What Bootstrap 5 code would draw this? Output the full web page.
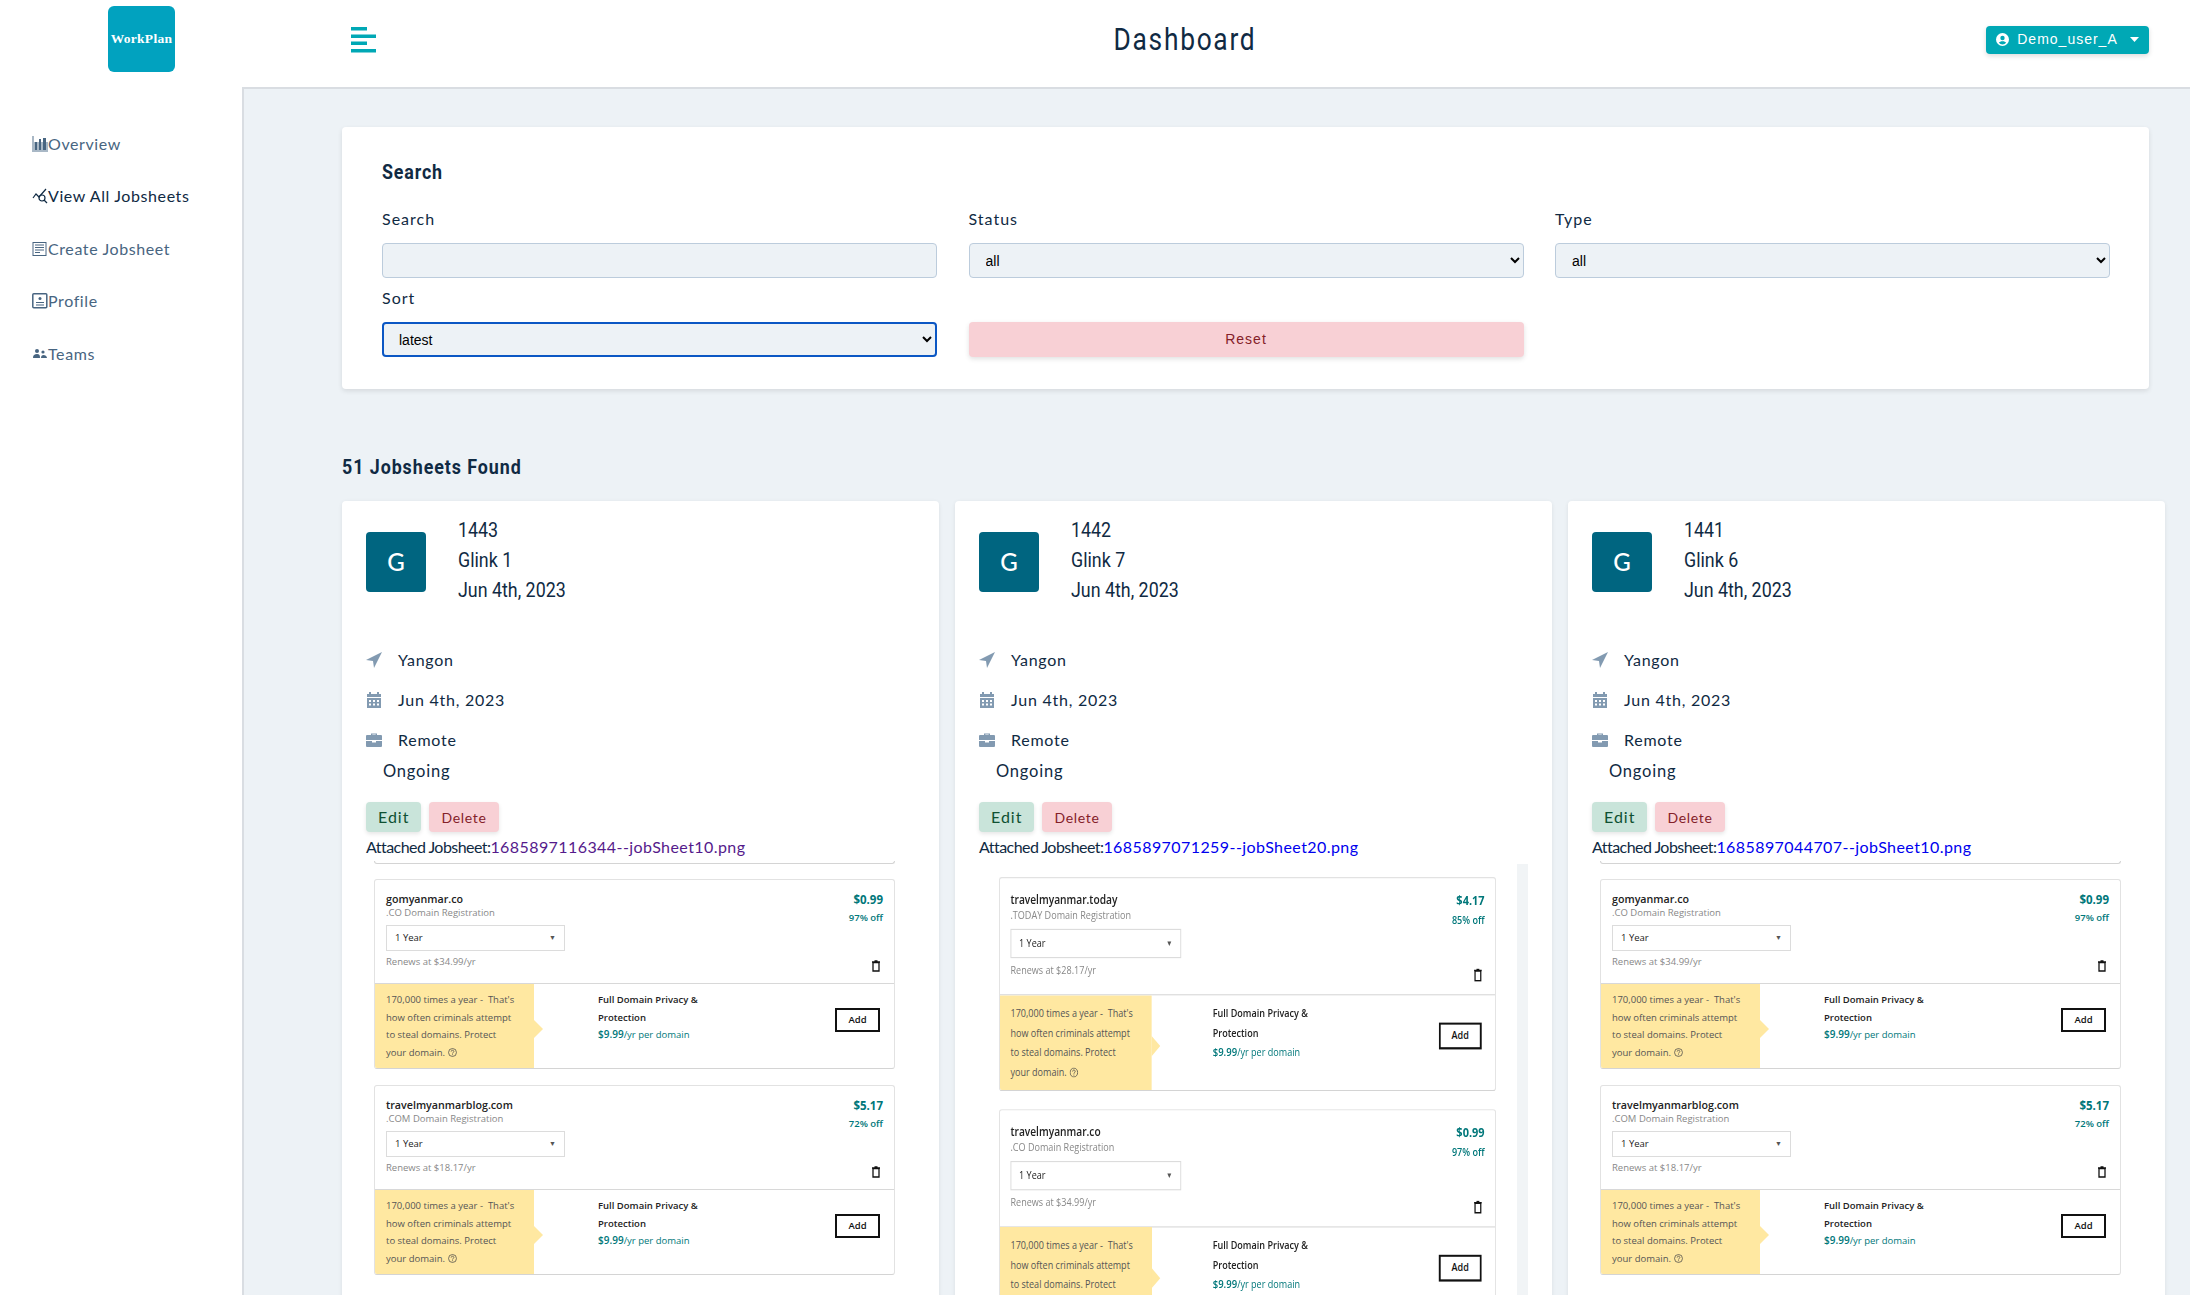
<!DOCTYPE html>
<html lang="en">
<head>
<meta charset="UTF-8">
<title>Dashboard</title>
<link href="https://cdn.jsdelivr.net/npm/bootstrap@5.3.0/dist/css/bootstrap.min.css" rel="stylesheet">
<style>
    html, body { height: 100%; overflow: hidden; }
    body { font-family: "Lato", "Open Sans", sans-serif; color: #102a43; background: #fff; }
    .cond { font-family: "Roboto", sans-serif; display: inline-block; transform: scaleX(.85); transform-origin: left center; white-space: nowrap; }
    .side-col { width: 242px; flex: none; }
    .logo-box { width: 67px; height: 66px; margin: 6px 0 0 108px; background: #01a2bf; border-radius: 6px; color: #fff; font-family: "Liberation Serif", serif; font-weight: 700; font-size: 13.5px; letter-spacing: .3px; }
    .side-nav { margin-top: 45.5px; padding-left: 32px; }
    .side-link { height: 52.5px; color: #486581; font-size: 16px; letter-spacing: .6px; text-decoration: none; }
    .side-link.is-active { color: #102a43; }
    .side-link svg { width: 16px; height: 16px; flex: none; }
    .top-bar { height: 89px; border-bottom: 2px solid #d9dde2; padding: 0 41px 8px 109px; }
    .burger-icon { flex: none; }
    .page-title { font-size: 31px; letter-spacing: 2px; font-weight: 400; margin: 0; color: #102a43; transform-origin: center; }
    .title-slot { flex-grow: 1; text-align: center; padding-left: 8px; }
    .user-btn { background: #00a8b5; color: #fff; border: 0; border-radius: 4px; height: 28px; width: 163px; flex: none; font-size: 14px; letter-spacing: 1px; font-family: "Liberation Sans", sans-serif; box-shadow: 0 2px 5px rgba(0,0,0,.14); }
    .main-area { background: #edf2f6; border-left: 2px solid #d9dde2; height: 1206px; padding: 38px 0 0 98px; }
    .search-panel { width: 1807px; height: 262px; background: #fff; border-radius: 4px; box-shadow: 0 2px 5px rgba(0,0,0,.1); padding: 31px 40px 0; }
    .panel-title { font-size: 21px; font-weight: 700; letter-spacing: 1px; line-height: 28px; margin-bottom: 21px; display: block; }
    .form-rows { display: grid; grid-template-columns: 555px 555px 555px; column-gap: 31.5px; }
    .field-label { font-size: 16px; letter-spacing: 1px; margin-bottom: 12px; line-height: 24px; display: block; }
    .search-input { height: 35px; background-color: #edf2f6; border: 1px solid #bcccdc; border-radius: 4px; font-family: "Liberation Sans", sans-serif; font-size: 14px; color: #000; padding: 0 12px; width: 100%; }
    .search-input.is-focus { border: 2px solid #0b57c4; padding: 0 11px; }
    .field-cell { margin-bottom: 8px; }
    .reset-btn { height: 35px; background: #f8d0d5; color: #842029; border: 0; border-radius: 4px; width: 100%; font-size: 14px; letter-spacing: 1px; box-shadow: 0 2px 5px rgba(0,0,0,.12); margin-top: 36px; font-family: "Liberation Sans", sans-serif; }
    .found-title { font-size: 21px; font-weight: 700; letter-spacing: 1.1px; margin: 64px 0 20px; line-height: 28px; display: block; }
    .job-grid { display: flex; gap: 16px; }
    .job-card { width: 597px; height: 800px; flex: none; background: #fff; border-radius: 4px; box-shadow: 0 1px 4px rgba(0,0,0,.08); padding: 14px 24px 0; overflow: hidden; position: relative; }
    .avatar-box { width: 60px; height: 60px; background: #006580; color: #fff; border-radius: 4px; font-size: 24px; font-weight: 500; margin-top: 17px; margin-right: 32px; }
    .head-lines { font-size: 21px; line-height: 30px; color: #102a43; display: block; }
    .fact-list { margin-top: 35px; font-size: 16px; letter-spacing: .75px; }
    .fact-row { height: 40px; gap: 16px; }
    .fact-row svg { width: 16px; height: 16px; flex: none; color: #829ab1; }
    .status-line { margin: -5px 0 0 17px; height: 32px; line-height: 32px; font-size: 16.5px; letter-spacing: .8px; }
    .act-row { margin-top: 15px; }
    .act-btn { height: 30px; border: 0; border-radius: 4px; padding: 0 12px; font-size: 16px; letter-spacing: 1px; box-shadow: 0 2px 4px rgba(0,0,0,.1); }
    .act-edit { background: #c9e4da; color: #0f5132; }
    .act-del { background: #f8d0d5; color: #842029; font-size: 14px; letter-spacing: .7px; }
    .attach-line { font-size: 16px; line-height: 24px; margin-top: 3px; white-space: nowrap; letter-spacing: -.55px; }
    .attach-line a { letter-spacing: .42px; text-decoration: none; }
    .visited { color: #551a8b; }
    .unvisited { color: #0000ee; }
    .clip-edge { position: absolute; left: 32px; top: 360px; width: 521px; height: 3px; border: 1px solid #d4d4d4; border-top: 0; border-radius: 0 0 4px 4px; }
    .stack-abs { position: absolute; left: 32px; top: 378px; width: 521px; }
    .stack-b { left: 44px; top: 376px; transform: scale(.954, 1.127); transform-origin: top left; }
    .scroll-strip { position: absolute; left: 562px; top: 363px; bottom: 0; width: 11px; background: #f1f4f6; }
    .domain-box { height: 190px; border: 1px solid #e2e2e2; border-bottom-color: #d4d4d4; border-radius: 3px; margin-bottom: 16px; font-family: "Open Sans", sans-serif; background: #fff; overflow: hidden; }
    .domain-top { height: 104px; padding: 12px 10px 0 11px; border-bottom: 1px solid #d8d8d8; position: relative; }
    .domain-name { font-size: 10.7px; font-weight: 600; color: #222; line-height: 14px; }
    .domain-sub { font-size: 9.5px; color: #888; line-height: 14px; }
    .year-box { width: 179px; height: 26px; margin-top: 5px; border: 1px solid #dcdcdc; font-size: 9.5px; color: #222; padding: 0 8px; }
    .year-caret { font-size: 7px; color: #555; }
    .renew-line { font-size: 9.5px; color: #888; margin-top: 4px; line-height: 14px; }
    .price-main { position: absolute; right: 11px; top: 12px; font-size: 11.5px; font-weight: 700; color: #00777a; line-height: 16px; text-align: right; }
    .price-off { font-size: 9.5px; line-height: 20px; font-weight: 600; }
    .trash-icon { position: absolute; right: 13px; top: 80px; width: 10px; height: 12px; }
    .domain-low { height: 85px; position: relative; }
    .warn-flag { width: 159px; background: #ffe8a1; padding: 7px 4px 0 11px; font-size: 9.5px; line-height: 17.7px; color: #555; position: relative; flex: none; white-space: nowrap; }
    .warn-flag::after { content: ""; position: absolute; right: -9px; top: 36px; border-left: 9px solid #ffe8a1; border-top: 9px solid transparent; border-bottom: 9px solid transparent; }
    .warn-flag svg { width: 9px; height: 9px; margin-left: 3px; vertical-align: -1px; }
    .privacy-box { margin-left: 64px; padding-top: 7px; font-size: 9.5px; line-height: 17.7px; white-space: nowrap; }
    .privacy-name { font-weight: 600; color: #222; }
    .privacy-price { color: #00777a; }
    .privacy-price b { font-size: 10px; font-weight: 600; }
    .add-btn { position: absolute; right: 14px; top: 24px; width: 45px; height: 24px; background: #fff; border: 2px solid #111; font-size: 9.5px; font-weight: 600; color: #111; padding: 0; border-radius: 0; }
</style>
</head>
<body>
<div class="d-flex vh-100">
    <div class="side-col">
        <div class="logo-box d-flex align-items-center justify-content-center">WorkPlan</div>
        <nav class="side-nav d-flex flex-column">
            <a class="side-link d-flex align-items-center" href="#">
                <svg viewBox="0 0 16 16"><path d="M0 0h2v14h14v2H0z M2 6h14v8H2z" fill="#a9b8c6"/><path d="M3 6h2v8H3zM7 3h2v11H7zM11 2h3v12h-3z" fill="#486581"/></svg>Overview</a>
            <a class="side-link is-active d-flex align-items-center" href="#">
                <svg viewBox="0 0 16 16" fill="none" stroke="#102a43" stroke-width="1.2"><path d="M1 10l3-4 3 3 7-8"/><circle cx="10" cy="10" r="3"/><path d="M12 12l3 3"/></svg>View All Jobsheets</a>
            <a class="side-link d-flex align-items-center" href="#">
                <svg viewBox="0 0 16 16" fill="none" stroke="#486581" stroke-width="1"><rect x="1" y="1.5" width="13" height="13"/><path d="M3 4h9M3 6.500h9M3 9h9M3 11.500h5"/></svg>Create Jobsheet</a>
            <a class="side-link d-flex align-items-center" href="#">
                <svg viewBox="0 0 16 16" fill="none" stroke="#486581" stroke-width="1.5"><rect x=".8" y=".8" width="14" height="14" rx="1"/><path d="M4 12h8M4 9.500h8" stroke-width="1.2"/><circle cx="8" cy="5.500" r="1.500" fill="#486581" stroke="none"/></svg>Profile</a>
            <a class="side-link d-flex align-items-center" href="#">
                <svg viewBox="0 0 16 16" fill="#486581"><circle cx="5" cy="5" r="2"/><circle cx="11" cy="6" r="1.600"/><path d="M1 12c0-3 1.500-4 4-4s3 1 3 4zM9 12c0-2 1-3 2.500-3s3.500 1 3.500 3z"/></svg>Teams</a>
        </nav>
    </div>
    <div class="flex-grow-1">
        <div class="top-bar d-flex align-items-center">
            <svg width="25" height="26" viewBox="0 0 25 26" fill="#00a8b5" class="burger-icon"><rect x="0" y="0" width="16" height="3.500"/><rect x="0" y="7.500" width="25" height="3.500"/><rect x="0" y="14.500" width="16" height="3.500"/><rect x="0" y="22" width="25" height="3.500"/></svg>
            <div class="title-slot"><h1 class="page-title cond">Dashboard</h1></div>
            <button class="user-btn d-flex align-items-center justify-content-center gap-2">
                <svg width="13" height="13" viewBox="0 0 16 16" fill="#fff"><path d="M8 0a8 8 0 100 16A8 8 0 008 0zm0 3.500a2.700 2.700 0 110 5.400 2.700 2.700 0 010-5.400zM8 14a6 6 0 01-4.500-2c.6-1.300 2.500-2 4.500-2s3.900.7 4.500 2A6 6 0 018 14z"/></svg>
                Demo_user_A
                <svg width="9" height="5" viewBox="0 0 9 5" fill="#fff" class="ms-1"><path d="M0 0h9L4.500 5z"/></svg>
            </button>
        </div>
        <div class="main-area">
            <div class="search-panel">
                <div class="panel-title cond">Search</div>
                <div class="form-rows">
                    <div class="field-cell"><label class="field-label">Search</label><input class="search-input" type="text"></div>
                    <div class="field-cell"><label class="field-label">Status</label><select class="search-input"><option>all</option></select></div>
                    <div class="field-cell"><label class="field-label">Type</label><select class="search-input"><option>all</option></select></div>
                    <div class="field-cell"><label class="field-label">Sort</label><select class="search-input is-focus"><option>latest</option></select></div>
                    <div class="field-cell"><button class="reset-btn">Reset</button></div>
                </div>
            </div>
            <div class="found-title cond">51 Jobsheets Found</div>
            <div class="job-grid" id="jobs"></div>
        </div>
    </div>
</div>
<script>
    const TRASH = '<svg class="trash-icon" viewBox="0 0 10 12" fill="none" stroke="#111" stroke-width="1.3"><path d="M2 2.500h6V11H2zM1 2h8M3.500 1h3"/></svg>';
    const HELP = '<svg viewBox="0 0 10 10" fill="none" stroke="#444" stroke-width=".8"><circle cx="5" cy="5" r="4.400"/><path d="M3.500 4c0-2 3-2 3 0 0 1-1.500 1-1.500 2.200M5 7v1"/></svg>';
    const PIN = '<svg viewBox="0 0 16 16" fill="currentColor"><path d="M16 0L0 8l7 1 1 7z"/></svg>';
    const CAL = '<svg viewBox="0 0 16 16" fill="currentColor"><path d="M3 0h2v2h6V0h2v2h2v3H1V2h2zM1 6h14v10H1zm2 2v2h2V8zm4 0v2h2V8zm4 0v2h2V8zm-8 3.500v2h2v-2zm4 0v2h2v-2zm4 0v2h2v-2z" fill-rule="evenodd"/></svg>';
    const BAG = '<svg viewBox="0 0 16 16" fill="currentColor"><path d="M5 3V1.500h6V3h4a1 1 0 011 1v4H0V4a1 1 0 011-1zm1.300 0h3.400v-.5H6.300zM0 9h6v1.500h4V9h6v5a1 1 0 01-1 1H1a1 1 0 01-1-1z" fill-rule="evenodd"/></svg>';

    function domainBox(name, ext, renew, price, off) {
        return `<div class="domain-box">
            <div class="domain-top">
                <div class="domain-name">${name}</div>
                <div class="domain-sub">.${ext} Domain Registration</div>
                <div class="year-box d-flex align-items-center justify-content-between"><span>1 Year</span><span class="year-caret">▼</span></div>
                <div class="renew-line">Renews at $${renew}/yr</div>
                <div class="price-main">$${price}<div class="price-off">${off}% off</div></div>
                ${TRASH}
            </div>
            <div class="domain-low d-flex">
                <div class="warn-flag">170,000 times a year - &nbsp;That's<br>how often criminals attempt<br>to steal domains. Protect<br>your domain.${HELP}</div>
                <div class="privacy-box"><div class="privacy-name">Full Domain Privacy &amp;<br>Protection</div><div class="privacy-price"><b>$9.99</b>/yr per domain</div></div>
                <button class="add-btn">Add</button>
            </div>
        </div>`;
    }

    const jobs = [
        { id: 1443, name: "Glink 1", file: "1685897116344--jobSheet10.png", linkCls: "visited", stackCls: "", edge: true, strip: false,
          boxes: [["gomyanmar.co","CO","34.99","0.99",97],["travelmyanmarblog.com","COM","18.17","5.17",72]] },
        { id: 1442, name: "Glink 7", file: "1685897071259--jobSheet20.png", linkCls: "unvisited", stackCls: "stack-b", edge: false, strip: true,
          boxes: [["travelmyanmar.today","TODAY","28.17","4.17",85],["travelmyanmar.co","CO","34.99","0.99",97]] },
        { id: 1441, name: "Glink 6", file: "1685897044707--jobSheet10.png", linkCls: "unvisited", stackCls: "", edge: true, strip: false,
          boxes: [["gomyanmar.co","CO","34.99","0.99",97],["travelmyanmarblog.com","COM","18.17","5.17",72]] }
    ];

    document.getElementById("jobs").innerHTML = jobs.map(j => `
        <div class="job-card">
            <div class="d-flex">
                <div class="avatar-box d-flex align-items-center justify-content-center">G</div>
                <div class="head-lines cond"><div>${j.id}</div><div>${j.name}</div><div>Jun 4th, 2023</div></div>
            </div>
            <div class="fact-list">
                <div class="fact-row d-flex align-items-center">${PIN}<span>Yangon</span></div>
                <div class="fact-row d-flex align-items-center">${CAL}<span>Jun 4th, 2023</span></div>
                <div class="fact-row d-flex align-items-center">${BAG}<span>Remote</span></div>
                <div class="status-line">Ongoing</div>
            </div>
            <div class="act-row d-flex gap-2"><button class="act-btn act-edit">Edit</button><button class="act-btn act-del">Delete</button></div>
            <div class="attach-line">Attached Jobsheet:<a class="${j.linkCls}" href="#">${j.file}</a></div>
            ${j.edge ? '<div class="clip-edge"></div>' : ''}
            ${j.strip ? '<div class="scroll-strip"></div>' : ''}
            <div class="stack-abs ${j.stackCls}">${j.boxes.map(b => domainBox(...b)).join("")}</div>
        </div>`).join("");
</script>
<script src="https://cdn.jsdelivr.net/npm/bootstrap@5.3.0/dist/js/bootstrap.bundle.min.js"></script>
</body>
</html>
